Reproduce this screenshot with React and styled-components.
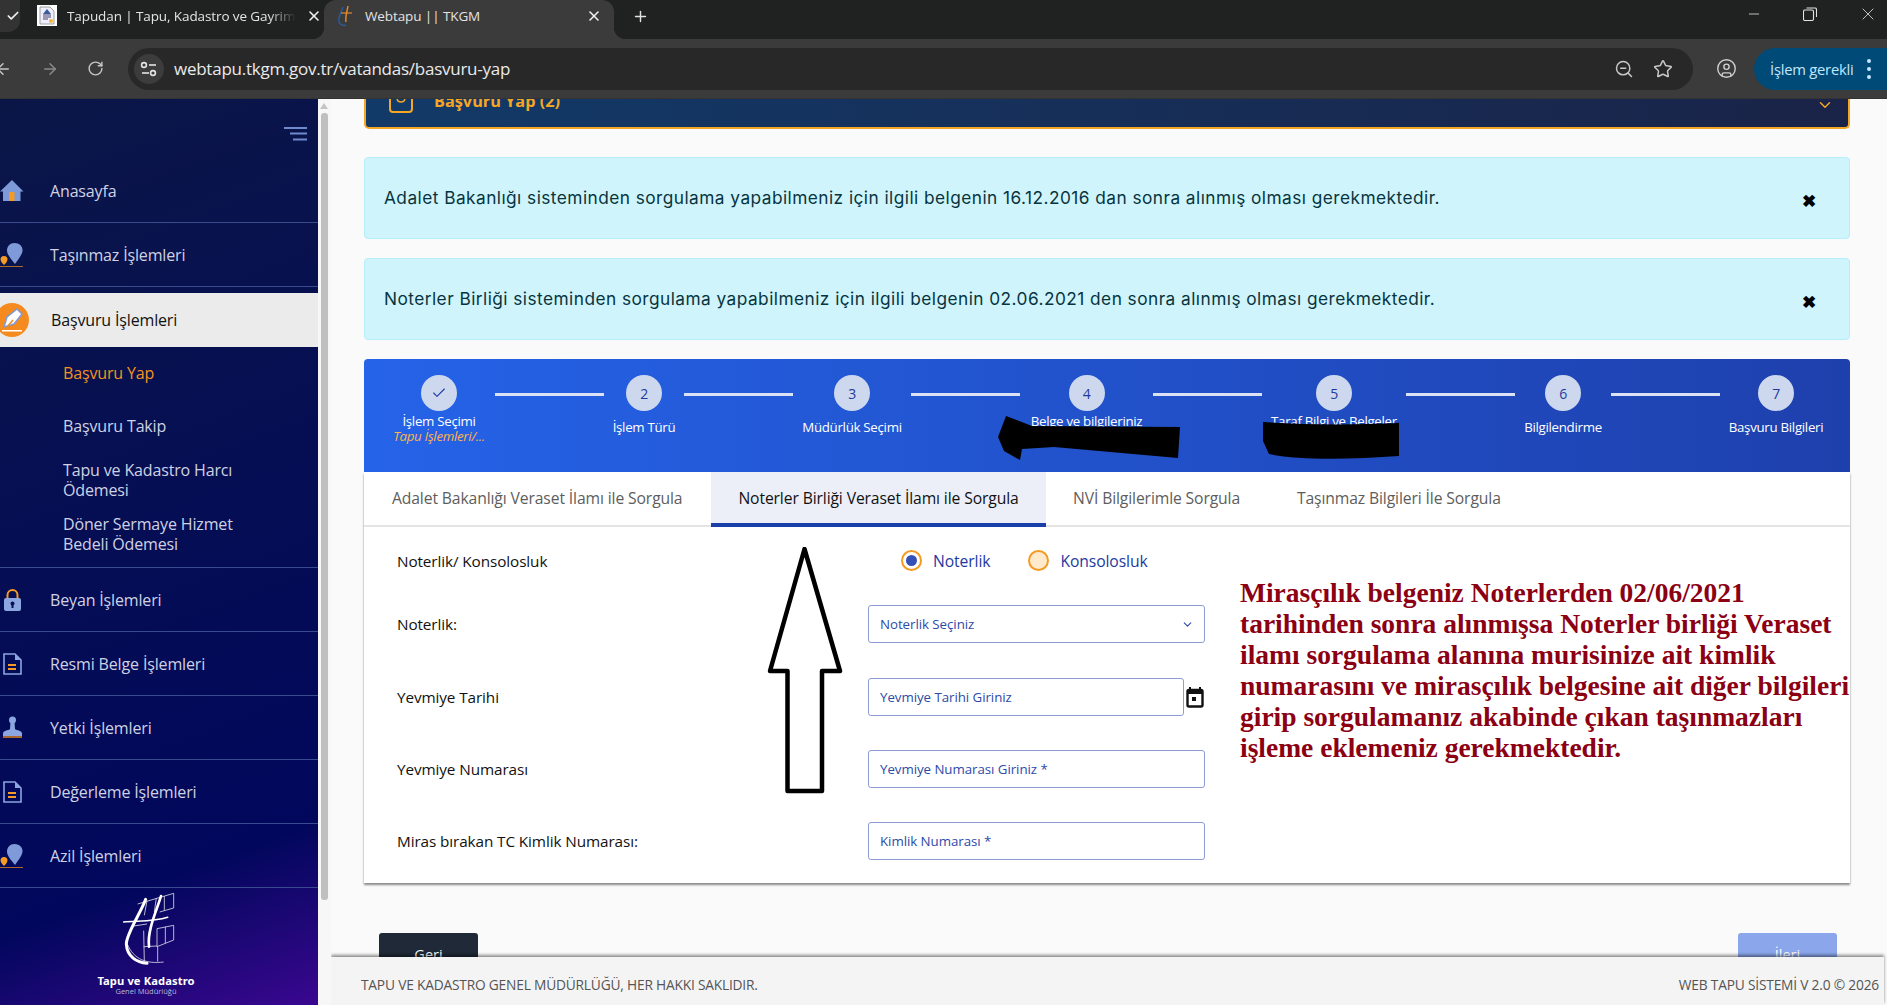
import React from 'react';
import styled, { createGlobalStyle } from 'styled-components';
import { ArrowLeft, ArrowRight, RotateCw, ZoomOut, Star, CircleUser, X, Plus, Check, ChevronDown, Minus } from 'lucide-react';

const Global = createGlobalStyle`
  html, body { margin: 0; padding: 0; background: #fafafa; overflow: hidden; }
  * { box-sizing: border-box; }
`;
const UI = `"Open Sans", "Noto Sans", sans-serif`;

const Page = styled.div`width:1887px;height:1005px;display:flex;flex-direction:column;overflow:hidden;font-family:${UI};position:relative;`;
const TabStrip = styled.div`height:39px;background:#202221;display:flex;align-items:stretch;position:relative;flex:none;`;
const PrevTab = styled.div`width:20px;height:32px;background:#333;border-radius:0 0 12px 0;color:#eee;display:flex;align-items:center;justify-content:flex-end;padding-right:0;`;
const Tab = styled.div`
  width:${p=>p.$w}px;margin-left:${p=>p.$ml}px;display:flex;align-items:center;padding-bottom:${p=>p.$active?7:8}px;position:relative;
  color:#e3e3e3;font-size:13.5px;letter-spacing:-.1px;
  background:${p=>p.$active?'#3b3b3b':'transparent'};border-radius:0 0 0 0;
  ${p=>p.$active?`border-radius:12px 12px 0 0;&::before,&::after{content:"";position:absolute;bottom:0;width:12px;height:12px;}
  &::before{left:-12px;background:radial-gradient(circle at 0 0,transparent 12px,#3b3b3b 12.5px);}
  &::after{right:-12px;background:radial-gradient(circle at 100% 0,transparent 12px,#3b3b3b 12.5px);}`:''}
`;
const TabTitle = styled.span`flex:1;margin-left:${p=>p.$ml}px;white-space:nowrap;overflow:hidden;
  ${p=>p.$fade?'-webkit-mask-image:linear-gradient(90deg,#000 88%,transparent 100%);':''}`;
const TabClose = styled(X)`margin-left:${p=>p.$gap||0}px;margin-right:${p=>p.$mr}px;color:#f0f0f0;flex:none;`;
const NewTab = styled.div`margin-left:18px;display:flex;align-items:center;padding-bottom:7px;color:#e3e3e3;`;
const WinControls = styled.div`margin-left:auto;display:flex;align-items:center;gap:41px;padding:0 9px 11px 0;color:#e3e3e3;`;
const Toolbar = styled.div`height:60px;background:#3b3b3b;display:flex;align-items:center;color:#c7c7c7;flex:none;border-bottom:1px solid #333;position:relative;`;
const NavSlot = styled.div`width:${p=>p.$w}px;display:flex;justify-content:center;color:${p=>p.$dim?'#8a8a8a':'#c7c7c7'};flex:none;`;
const AddressBar = styled.div`margin-left:24px;width:1565px;height:42px;border-radius:21px;background:#282828;display:flex;align-items:center;padding:0 20px 0 6px;flex:none;`;
const SiteBtn = styled.div`width:30px;height:30px;border-radius:50%;background:#3c3c3c;display:flex;align-items:center;justify-content:center;flex:none;`;
const Url = styled.div`margin-left:10px;color:#eaeaea;font-size:17px;letter-spacing:-.25px;flex:1;white-space:nowrap;`;
const AddrIcons = styled.div`display:flex;gap:19px;align-items:center;`;
const ProfileSlot = styled.div`margin-left:23px;display:flex;color:#d0d0d0;`;
const ActionPill = styled.div`margin-left:17px;width:133px;height:42px;border-radius:21px 0 0 21px;background:#004a77;color:#c2e7ff;font-size:14.8px;letter-spacing:-.25px;display:flex;align-items:center;justify-content:space-between;padding:0 16px 0 16px;`;
const DotsCol = styled.div`display:flex;flex-direction:column;gap:4px;span{width:4px;height:4px;border-radius:50%;background:#c2e7ff;}`;

const Body = styled.div`flex:1;display:flex;min-height:0;`;
const Sidebar = styled.aside`width:318px;flex:none;background:linear-gradient(160deg,#0b1647 0%,#060f52 40%,#01075c 82%,#3a0790 100%);display:flex;flex-direction:column;overflow:hidden;position:relative;`;
const SideTop = styled.div`height:60px;display:flex;justify-content:flex-end;align-items:flex-start;padding:28px 11px 0 0;flex:none;`;
const SideItem = styled.div`height:${p=>p.$active?54:64}px;margin-top:${p=>p.$active?6:0}px;display:flex;align-items:center;flex:none;
  background:${p=>p.$active?'#ebebeb':'transparent'};border-bottom:${p=>p.$active?'none':'1px solid #3a4a8f'};
  color:${p=>p.$active?'#111':'#cfd2e4'};font-size:16px;font-weight:500;letter-spacing:-.15px;`;
const SideIcon = styled.div`width:${p=>p.$active?51:50}px;flex:none;display:flex;padding-left:0;`;
const SubList = styled.div`display:flex;flex-direction:column;padding:0 62px 0 63px;height:221px;border-bottom:1px solid #3a4a8f;flex:none;font-size:16px;font-weight:500;letter-spacing:-.15px;color:#cfd2e4;`;
const SubItem = styled.div`margin-top:${p=>p.$mt}px;line-height:20px;color:${p=>p.$on?'#f5921e':'inherit'};`;
const LogoBox = styled.div`flex:1;display:flex;flex-direction:column;align-items:center;padding:3px 26px 0 0;`;
const LogoMark = styled.div`margin-left:6px;display:flex;`;
const LogoTitle = styled.div`color:#fff;font-size:11.2px;font-weight:700;line-height:13px;margin-top:9px;letter-spacing:.1px;white-space:nowrap;font-family:"Noto Sans",sans-serif;`;
const LogoSub = styled.div`color:#b8bcd8;font-size:7.5px;line-height:9px;white-space:nowrap;`;
const ScrollRail = styled.div`width:13px;flex:none;background:#f7f7f7;position:relative;padding:14px 3px 0 3px;`;
const ScrollThumb = styled.div`height:787px;background:#bfbfbf;border-radius:3px;`;
const ScrollArrow = styled.div`position:absolute;top:4px;left:2px;border-left:4px solid transparent;border-right:4px solid transparent;border-bottom:6px solid #c4c4c4;`;

const Main = styled.main`flex:1;min-width:0;background:#fafafa;position:relative;overflow:hidden;padding:0 37px 0 33px;`;
const ApplyBar = styled.div`margin-top:-24px;height:54px;background:linear-gradient(90deg,#123a68,#1a2348);border:2px solid #f5a623;border-top:none;border-radius:0 0 5px 5px;display:flex;align-items:center;color:#f5a623;font-weight:700;font-size:16.3px;padding:0 14px 0 23px;`;
const ApplyIcon = styled.div`width:24px;height:24px;border:2px solid #f5a623;border-radius:4px;margin-right:21px;display:flex;align-items:center;justify-content:center;flex:none;`;
const ApplyText = styled.span`flex:1;`;
const Alert = styled.div`height:82px;margin-top:${p=>p.$mt}px;background:#cff4fc;border:1px solid #b6effb;border-radius:4px;display:flex;align-items:center;justify-content:space-between;padding:0 33px 1px 19px;color:#07343f;font-size:17.3px;font-family:"Inter",sans-serif;letter-spacing:.45px;`;
const AlertClose = styled.span`color:#000;font-size:17px;font-weight:900;margin-top:8px;line-height:1;`;
const Stepper = styled.div`margin-top:19px;height:113px;background:linear-gradient(90deg,#2563e8,#1e40ad);border-radius:4px 4px 0 0;display:flex;padding:16px 18px 0 19px;position:relative;`;
const Step = styled.div`width:${p=>p.$w}px;display:flex;flex-direction:column;align-items:center;color:#fff;font-size:13.3px;letter-spacing:-.3px;position:relative;flex:none;`;
const Connector = styled.div`width:109px;height:3px;background:#dbe2f5;margin-top:18px;flex:none;`;
const Circle = styled.div`width:36px;height:36px;border-radius:50%;background:#cdd8ee;color:#1e3a9f;font-size:14px;display:flex;align-items:center;justify-content:center;`;
const StepLabel = styled.div`margin-top:${p=>p.$two?2:8}px;line-height:16px;white-space:nowrap;`;
const StepSub = styled.div`color:#ffb347;font-style:italic;line-height:14px;font-size:13.3px;white-space:nowrap;`;
const Redaction = styled.svg`position:absolute;left:0;top:0;width:100%;height:100%;pointer-events:none;`;
const Card = styled.section`background:#fff;box-shadow:0 2px 2px rgba(0,0,0,.45);position:relative;`;
const Tabs = styled.div`height:55px;display:flex;border-bottom:2px solid #e4e4e4;padding-left:28px;`;
const TabItem = styled.div`height:55px;display:flex;align-items:center;padding-bottom:${p=>p.$active?0:3}px;white-space:nowrap;font-size:15.7px;letter-spacing:-.12px;
  width:${p=>p.$w}px;justify-content:${p=>p.$active?'center':'flex-start'};
  color:${p=>p.$active?'#111':'#5d5d5d'};font-weight:${p=>p.$active?500:400};
  background:${p=>p.$active?'#eceff8':'transparent'};border-bottom:${p=>p.$active?'4px solid #1b3fa8':'none'};`;
const FormWrap = styled.div`display:flex;`;
const FormCol = styled.div`width:841px;flex:none;padding:23px 0 23px 33px;display:flex;flex-direction:column;gap:34px;`;
const Row = styled.div`display:flex;align-items:center;height:${p=>p.$radio?21:38}px;margin-top:${p=>p.$mt||0}px;`;
const Label = styled.div`width:471px;flex:none;font-size:15.3px;font-weight:500;color:#111;letter-spacing:-.1px;`;
const Radios = styled.div`display:flex;align-items:center;padding-left:33px;font-size:15.7px;color:#1e3a9f;letter-spacing:-.1px;`;
const Radio = styled.span`width:21px;height:21px;border-radius:50%;border:2px solid #f59a23;background:${p=>p.$on?'#fff':'#ffeacd'};display:flex;align-items:center;justify-content:center;margin-left:${p=>p.$ml||0}px;margin-right:11px;
  &::after{content:"";width:${p=>p.$on?11:0}px;height:${p=>p.$on?11:0}px;border-radius:50%;background:#3350b8;}`;
const Field = styled.div`width:${p=>p.$w}px;height:38px;border:1px solid #8c9bd6;border-radius:3px;display:flex;align-items:center;justify-content:space-between;padding:0 10px 0 11px;font-size:13.3px;color:#2d4aa8;letter-spacing:-.05px;flex:none;`;
const CalSlot = styled.div`margin-left:2px;display:flex;color:#111;`;
const Note = styled.div`margin:50px 0 0 35px;font-family:"Liberation Serif",serif;font-weight:700;font-size:27.5px;line-height:31px;color:#8b0012;white-space:nowrap;`;
const Buttons = styled.div`margin-top:50px;display:flex;justify-content:space-between;padding:0 13px 0 15px;`;
const Btn = styled.div`width:99px;height:45px;border-radius:3px 3px 0 0;display:flex;align-items:center;justify-content:center;padding-bottom:3px;color:#fff;font-size:14.5px;background:${p=>p.$light?'#8ba6ea':'#1f2937'};`;
const Footer = styled.footer`position:absolute;left:0;right:3px;bottom:0;height:48px;background:#f4f4f4;box-shadow:0 -2px 3px rgba(0,0,0,.45);display:flex;align-items:center;justify-content:space-between;padding:7px 5px 0 30px;color:#555;font-size:13.75px;letter-spacing:-.2px;`;
const ArrowOverlay = styled.svg`position:absolute;left:402px;top:75px;width:80px;height:250px;pointer-events:none;`;

const IconHome = () => <svg width="24" height="24" viewBox="0 0 24 24"><path d="M12 1 L23.5 12.5 H20.5 V22 H3 V12.5 H0 Z" fill="#7e9ad8"/><rect x="9" y="13" width="5.5" height="9" fill="#f59a23"/></svg>;
const IconPin = () => <svg width="24" height="26" viewBox="0 0 24 26"><path d="M14.5 1 C20 1 23 5 22.5 9 C22 13 17 19 15 22 C12 18 7 13 7 8.5 C7 4.5 10 1 14.5 1Z" fill="#7e9ad8"/><path d="M4 14 a3.5 3.5 0 0 1 3.5 3.5 C7.5 19.5 5 22 4 23 C3 22 .5 19.5 .5 17.5 A3.5 3.5 0 0 1 4 14Z" fill="#f59a23"/><rect x="0" y="24" width="23" height="1" fill="#a9682a"/></svg>;
const IconPen = () => <svg width="29" height="34" viewBox="0 0 29 34"><circle cx="12" cy="17" r="17" fill="#f58a1f"/><path d="M4 24 L7 14 L17 6 L22 11 L14 21 Z" fill="#fff" stroke="#7e9ad8" strokeWidth="1.5"/><path d="M7 24 L13 17" stroke="#f58a1f" strokeWidth="1.5"/><rect x="2" y="27" width="20" height="1.5" fill="#fff"/></svg>;
const IconLock = () => <svg width="24" height="24" viewBox="0 0 24 24"><path d="M7.5 11 V7 a5 5 0 0 1 10 0 V11" stroke="#f59a23" strokeWidth="2" fill="none"/><rect x="4" y="10" width="17" height="13" rx="2" fill="#8ba6e0"/><circle cx="12.5" cy="15.5" r="2" fill="#0a1050"/><rect x="11.5" y="16" width="2" height="4" fill="#0a1050"/></svg>;
const IconDoc = () => <svg width="24" height="24" viewBox="0 0 24 24"><path d="M4 2 H15 L21 8 V22 H4 Z" fill="none" stroke="#8ba6e0" strokeWidth="1.6"/><path d="M15 2 V8 H21" fill="#8ba6e0"/><path d="M8 13 H16 M8 17 H16" stroke="#f59a23" strokeWidth="2"/></svg>;
const IconStamp = () => <svg width="24" height="24" viewBox="0 0 24 24"><circle cx="12.5" cy="4" r="3.5" fill="#8ba6e0"/><path d="M10.5 6 H14.5 L15 13 C15 14 21 14 22 17 V20 H3 V17 C4 14 10 14 10 13 Z" fill="#8ba6e0"/><rect x="3" y="20" width="19" height="2" fill="#a9682a"/></svg>;
const IconMenu = () => <svg width="23" height="14" viewBox="0 0 23 14"><path d="M0 1 H23 M6 6.5 H23 M9 12.5 H23" stroke="#7088cc" strokeWidth="2"/></svg>;
const IconSettings = () => <svg width="18" height="16" viewBox="0 0 18 16" fill="none" stroke="#e3e3e3" strokeWidth="1.6"><circle cx="4" cy="4" r="2.4"/><path d="M9 4 H16"/><circle cx="13" cy="12" r="2.4"/><path d="M2 12 H9"/></svg>;
const IconCalendar = () => <svg width="18" height="21" viewBox="0 0 18 21"><path d="M4 0 V4 M14 0 V4" stroke="#111" strokeWidth="2"/><rect x="1.5" y="3" width="15" height="16.5" rx="1.5" fill="#fff" stroke="#111" strokeWidth="2.4"/><rect x="1.5" y="3" width="15" height="4" fill="#111"/><rect x="6" y="10" width="4" height="4" fill="#111"/></svg>;
const FavDoc = () => <svg width="20" height="21" viewBox="0 0 20 21"><rect width="20" height="21" fill="#fff"/><path d="M3 2 H13 L17 6 V19 H3 Z" fill="#eef" stroke="#888" strokeWidth=".8"/><path d="M10 4 L6 9 H14 Z" fill="#3a5a9a"/><path d="M6 10 H14 M6 12 H14 M6 14 H11" stroke="#446" strokeWidth="1"/><circle cx="14" cy="16" r="2" fill="#f5b83d"/></svg>;
const FavT = () => <svg width="16" height="22" viewBox="0 0 16 22" fill="none"><path d="M6 2 C4 8 1 12 2 17 C3 20 7 21 9 20" stroke="#2b5a9e" strokeWidth="1.4"/><path d="M11 1 C10 7 8 12 9 17" stroke="#e08a2e" strokeWidth="1.5"/><path d="M4 8 H15" stroke="#e08a2e" strokeWidth="1.2"/></svg>;
const Logo = () => (
  <svg width="58" height="74" viewBox="360 993 172 222" fill="none">
    <g stroke="#d8d8e8" strokeWidth="2.5">
      <path d="M412 1032 L520 1000 L520 1044 L478 1056 M440 1022 L432 1066 M468 1014 L462 1056 M492 1008 L492 1052"/>
      <path d="M400 1098 L440 1092 M470 1106 L520 1096 L520 1140 L470 1160 Z M495 1100 V1150"/>
      <path d="M430 1112 L432 1205 M430 1160 L470 1158 M472 1160 V1205 M380 1150 C400 1200 440 1212 490 1206"/>
    </g>
    <g stroke="#fff" strokeLinecap="round">
      <path d="M436 1018 C420 1062 378 1120 378 1152 C380 1190 410 1208 440 1210" strokeWidth="9"/>
      <path d="M482 1008 C470 1050 440 1110 446 1160" strokeWidth="8"/>
      <path d="M370 1086 C410 1082 460 1086 502 1072" strokeWidth="5"/>
    </g>
  </svg>
);

const steps = [
  { w:112, mark:<Check size={16} strokeWidth={1.6}/>, label:'İşlem Seçimi', sub:'Tapu İşlemleri/...' },
  { w:80, mark:'2', label:'İşlem Türü' },
  { w:118, mark:'3', label:'Müdürlük Seçimi' },
  { w:133, mark:'4', label:'Belge ve bilgileriniz', sub:'' },
  { w:144, mark:'5', label:'Taraf Bilgi ve Belgeler', sub:'' },
  { w:96, mark:'6', label:'Bilgilendirme' },
  { w:112, mark:'7', label:'Başvuru Bilgileri' },
];

const menuTop = [['Anasayfa', <IconHome/>], ['Taşınmaz İşlemleri', <IconPin/>]];
const menuBottom = [['Beyan İşlemleri', <IconLock/>], ['Resmi Belge İşlemleri', <IconDoc/>], ['Yetki İşlemleri', <IconStamp/>], ['Değerleme İşlemleri', <IconDoc/>], ['Azil İşlemleri', <IconPin/>]];

export default function App() {
  return (
    <Page>
      <Global/>
      <TabStrip>
        <PrevTab><Check size={14} strokeWidth={3}/></PrevTab>
        <Tab $w={304} $ml={17}><FavDoc/><TabTitle $ml={10} $fade>Tapudan | Tapu, Kadastro ve Gayrimenkul</TabTitle><TabClose size={16} strokeWidth={2.4} $gap={10} $mr={19}/></Tab>
        <Tab $active $w={290} $ml={-17}><span style={{width:13}}/><FavT/><TabTitle $ml={12}>Webtapu || TKGM</TabTitle><TabClose size={16} strokeWidth={2.4} $mr={12}/></Tab>
        <NewTab><Plus size={17}/></NewTab>
        <WinControls><Minus size={16} strokeWidth={1.2}/><svg width="14" height="14" viewBox="0 0 14 14" fill="none" stroke="#e3e3e3" strokeWidth="1.1"><rect x=".5" y="3" width="10" height="10.5" rx="1.5"/><path d="M3.5 1 H12 a1.5 1.5 0 0 1 1.5 1.5 V10"/></svg><X size={20} strokeWidth={1}/></WinControls>
      </TabStrip>
      <Toolbar>
        <NavSlot $w={14}><ArrowLeft size={18} style={{marginLeft:-8}}/></NavSlot>
        <NavSlot $w={72} $dim><ArrowRight size={18}/></NavSlot>
        <NavSlot $w={18}><RotateCw size={17}/></NavSlot>
        <AddressBar>
          <SiteBtn><IconSettings/></SiteBtn>
          <Url>webtapu.tkgm.gov.tr/vatandas/basvuru-yap</Url>
          <AddrIcons><ZoomOut size={20} strokeWidth={1.8}/><Star size={20} strokeWidth={1.8}/></AddrIcons>
        </AddressBar>
        <ProfileSlot><CircleUser size={21} strokeWidth={1.6}/></ProfileSlot>
        <ActionPill>İşlem gerekli<DotsCol><span/><span/><span/></DotsCol></ActionPill>
      </Toolbar>
      <Body>
        <Sidebar>
          <SideTop><IconMenu/></SideTop>
          {menuTop.map(([t,i]) => <SideItem key={t}><SideIcon>{i}</SideIcon>{t}</SideItem>)}
          <SideItem $active><SideIcon $active><IconPen/></SideIcon>Başvuru İşlemleri</SideItem>
          <SubList>
            <SubItem $on $mt={16}>Başvuru Yap</SubItem>
            <SubItem $mt={33}>Başvuru Takip</SubItem>
            <SubItem $mt={24}>Tapu ve Kadastro Harcı Ödemesi</SubItem>
            <SubItem $mt={14}>Döner Sermaye Hizmet Bedeli Ödemesi</SubItem>
          </SubList>
          {menuBottom.map(([t,i]) => <SideItem key={t}><SideIcon>{i}</SideIcon>{t}</SideItem>)}
          <LogoBox>
            <LogoMark><Logo/></LogoMark>
            <LogoTitle>Tapu ve Kadastro</LogoTitle>
            <LogoSub>Genel Müdürlüğü</LogoSub>
          </LogoBox>
        </Sidebar>
        <ScrollRail><ScrollArrow/><ScrollThumb/></ScrollRail>
        <Main>
          <ApplyBar>
            <ApplyIcon><svg width="12" height="8" viewBox="0 0 12 8" fill="none"><path d="M2 2 C3 6 9 6 10 2" stroke="#f5a623" strokeWidth="1.4"/></svg></ApplyIcon>
            <ApplyText>Başvuru Yap (2)</ApplyText>
            <ChevronDown size={18} color="#f5a623" style={{marginTop:8}}/>
          </ApplyBar>
          <Alert $mt={28}>Adalet Bakanlığı sisteminden sorgulama yapabilmeniz için ilgili belgenin 16.12.2016 dan sonra alınmış olması gerekmektedir.<AlertClose>✖</AlertClose></Alert>
          <Alert $mt={19}>Noterler Birliği sisteminden sorgulama yapabilmeniz için ilgili belgenin 02.06.2021 den sonra alınmış olması gerekmektedir.<AlertClose>✖</AlertClose></Alert>
          <Stepper>
            {steps.map((s,i) => (
              <React.Fragment key={s.label}>
                <Step $w={s.w}>
                  <Circle>{s.mark}</Circle>
                  <StepLabel $two={s.sub !== undefined}>{s.label}</StepLabel>
                  {s.sub ? <StepSub>{s.sub}</StepSub> : null}
                </Step>
                {i < steps.length-1 && <Connector/>}
              </React.Fragment>
            ))}
            <Redaction viewBox="0 0 1486 113">
              <path d="M634 78 L642 57 L668 67 L816 68 L814 99 L690 88 L658 90 L656 101 L640 92 Z" fill="#000"/>
              <path d="M899 63 C940 66 990 66 1035 64 L1035 97 C990 100 940 102 905 95 L899 82 Z" fill="#000"/>
            </Redaction>
          </Stepper>
          <Card>
            <Tabs>
              <TabItem $w={319}>Adalet Bakanlığı Veraset İlamı ile Sorgula</TabItem>
              <TabItem $w={335} $active>Noterler Birliği Veraset İlamı ile Sorgula</TabItem>
              <TabItem $w={27}/>
              <TabItem $w={224}>NVİ Bilgilerimle Sorgula</TabItem>
              <TabItem $w={204}>Taşınmaz Bilgileri İle Sorgula</TabItem>
            </Tabs>
            <FormWrap>
              <FormCol>
                <Row $radio><Label>Noterlik/ Konsolosluk</Label>
                  <Radios><Radio $on/>Noterlik<Radio $ml={38}/>Konsolosluk</Radios>
                </Row>
                <Row><Label>Noterlik:</Label><Field $w={337}>Noterlik Seçiniz<ChevronDown size={13} strokeWidth={2}/></Field></Row>
                <Row $mt={1}><Label>Yevmiye Tarihi</Label><Field $w={316}>Yevmiye Tarihi Giriniz</Field><CalSlot><IconCalendar/></CalSlot></Row>
                <Row><Label>Yevmiye Numarası</Label><Field $w={337}>Yevmiye Numarası Giriniz *</Field></Row>
                <Row><Label>Miras bırakan TC Kimlik Numarası:</Label><Field $w={337}>Kimlik Numarası *</Field></Row>
              </FormCol>
              <Note>
                Mirasçılık belgeniz Noterlerden 02/06/2021<br/>
                tarihinden sonra alınmışsa Noterler birliği Veraset<br/>
                ilamı sorgulama alanına murisinize ait kimlik<br/>
                numarasını ve mirasçılık belgesine ait diğer bilgileri<br/>
                girip sorgulamanız akabinde çıkan taşınmazları<br/>
                işleme eklemeniz gerekmektedir.
              </Note>
            </FormWrap>
            <ArrowOverlay viewBox="0 0 80 250" fill="#fff" stroke="#000" strokeWidth="4.5" strokeLinejoin="round">
              <path d="M38.5 2 L74 124 H56 V244 H21.5 V124 H4 Z"/>
            </ArrowOverlay>
          </Card>
          <Buttons><Btn>Geri</Btn><Btn $light>İleri</Btn></Buttons>
          <Footer><span>TAPU VE KADASTRO GENEL MÜDÜRLÜĞÜ, HER HAKKI SAKLIDIR.</span><span>WEB TAPU SİSTEMİ V 2.0 © 2026</span></Footer>
        </Main>
      </Body>
    </Page>
  );
}
